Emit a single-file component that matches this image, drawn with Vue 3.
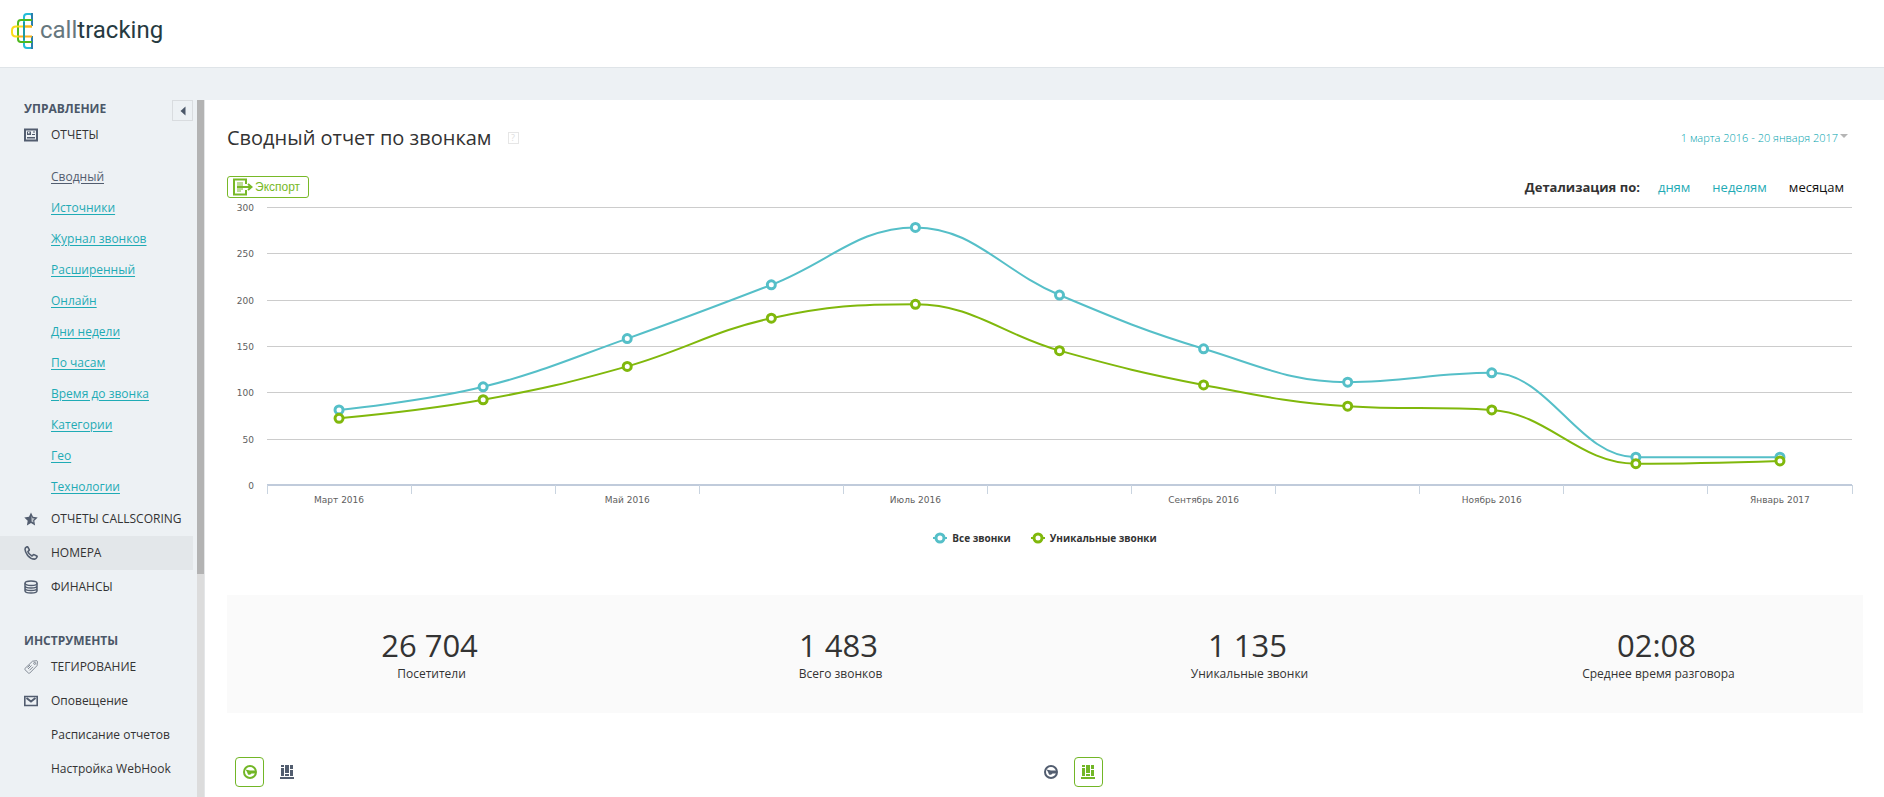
<script setup>
import { ref, computed, onMounted, onBeforeUnmount } from 'vue'

const reportLinks = ['Сводный', 'Источники', 'Журнал звонков', 'Расширенный', 'Онлайн', 'Дни недели', 'По часам', 'Время до звонка', 'Категории', 'Гео', 'Технологии']
const stats = [
  { value: '26 704', label: 'Посетители' },
  { value: '1 483', label: 'Всего звонков' },
  { value: '1 135', label: 'Уникальные звонки' },
  { value: '02:08', label: 'Среднее время разговора' }
]
const months = ['Март 2016', '', 'Май 2016', '', 'Июль 2016', '', 'Сентябрь 2016', '', 'Ноябрь 2016', '', 'Январь 2017']
const series = [
  { name: 'Все звонки', color: '#55bfc8', data: [81, 106, 158, 216, 278, 205, 147, 111, 121, 30, 30] },
  { name: 'Уникальные звонки', color: '#80b80c', data: [72, 92, 128, 180, 195, 145, 108, 85, 81, 23, 26] }
]
const panels = [{ active: 'pie' }, { active: 'bars' }]
const details = ['дням', 'неделям', 'месяцам']
const detail = ref('месяцам')

const chart = ref(null)
const width = ref(1636)
let observer
onMounted(() => {
  width.value = chart.value.clientWidth
  observer = new ResizeObserver(() => { width.value = chart.value.clientWidth })
  observer.observe(chart.value)
})
onBeforeUnmount(() => observer.disconnect())

const left = 40
const top = 9
const plotHeight = 278
const bottom = top + plotHeight
const right = computed(() => width.value - 11)
const step = computed(() => (right.value - left) / months.length)
const yOf = v => bottom - (v / 300) * plotHeight
const grid = [300, 250, 200, 150, 100, 50, 0]

// Spline whose control points never overshoot the neighbouring values
function spline(pts) {
  let d = `M${pts[0].x} ${pts[0].y}`
  let prev = pts[0]
  for (let i = 1; i < pts.length; i++) {
    const p = pts[i]
    const last = pts[i - 1]
    const next = pts[i + 1]
    let l = p
    let r = p
    if (next) {
      const lx = (1.5 * p.x + last.x) / 2.5
      const rx = (1.5 * p.x + next.x) / 2.5
      let ly = (1.5 * p.y + last.y) / 2.5
      let ry = (1.5 * p.y + next.y) / 2.5
      const c = ((ry - ly) * (rx - p.x)) / (rx - lx) + p.y - ry
      ly += c
      ry += c
      if (ly > last.y && ly > p.y) { ly = Math.max(last.y, p.y); ry = 2 * p.y - ly }
      else if (ly < last.y && ly < p.y) { ly = Math.min(last.y, p.y); ry = 2 * p.y - ly }
      if (ry > next.y && ry > p.y) { ry = Math.max(next.y, p.y); ly = 2 * p.y - ry }
      else if (ry < next.y && ry < p.y) { ry = Math.min(next.y, p.y); ly = 2 * p.y - ry }
      l = { x: lx, y: ly }
      r = { x: rx, y: ry }
    }
    d += `C${prev.x} ${prev.y} ${l.x} ${l.y} ${p.x} ${p.y}`
    prev = r
  }
  return d
}
const lines = computed(() => series.map(s => {
  const points = s.data.map((v, i) => ({ x: left + step.value * (i + 0.5), y: yOf(v) }))
  return { ...s, points, path: spline(points) }
}))
</script>

<template>
  <div class="page">
    <header class="header">
      <a href="#" class="logo" aria-label="calltracking">
        <svg width="24" height="38" viewBox="0 0 24 38" fill="none" stroke-width="2">
          <path d="M22 11V4q0-2-2-2h-3q-3 0-3 3v28q0 3 3 3h5" stroke="#22bdd8" />
          <path d="M22 1v13M22 24v13" stroke="#2a7fae" />
          <path d="M22 8H11q-3 0-3 3v16q0 3 3 3h11" stroke="#4fb81f" />
          <path d="M22 14.500H6q-4 0-4 4v2q0 4 4 4h2" stroke="#fbdc1a" />
          <path d="M8 24.500h14M14 14.500h8" stroke="#f8b21c" />
          <path d="M14 10v18" stroke="#1d9aa5" />
        </svg>
        <span class="brand"><span class="brand-light">call</span>tracking</span>
      </a>
    </header>

    <div class="body">
      <aside class="sidebar">
        <nav class="menu">
          <button class="collapse" type="button" aria-label="Свернуть меню">
            <svg width="6" height="10" viewBox="0 0 6 10"><path d="M5.500 .5v9L.5 5z" fill="#4b5768" /></svg>
          </button>
          <h2 class="section">УПРАВЛЕНИЕ</h2>
          <a href="#" class="item">
            <svg class="icon" viewBox="0 0 14 14"><path d="M1 1.500h12v11H1z" fill="none" stroke="#525d6f" stroke-width="2" /><path d="M3 3.500h4v3.500H3zM9 3.500h2v1H9zM8 6h3v1H8zM3 9h8v1.500H3z" fill="#525d6f" /><path d="M4 4h1.500v1.500H4z" fill="#edf1f4" /></svg>
            ОТЧЕТЫ
          </a>
          <ul class="sub">
            <li v-for="(link, i) in reportLinks" :key="link"><a href="#" :class="{ current: i === 0 }">{{ link }}</a></li>
          </ul>
          <a href="#" class="item">
            <svg class="icon" viewBox="0 0 14 14"><path d="M7 .5l2 4.300 4.700.6-3.400 3.300.8 4.700L7 11.100l-4.100 2.300.8-4.700L.3 5.400 5 4.800z" fill="#525d6f" /><path d="M7.500 4l1 2.200 2.300.3-1.700 1.700.4 2.400-2-1.100z" fill="#c3c9cf" /></svg>
            ОТЧЕТЫ CALLSCORING
          </a>
          <a href="#" class="item hovered">
            <svg class="icon" viewBox="0 0 14 14"><path d="M1 3.200Q1 1.600 3 .8q.6-.2.900.4l1.300 2.400q.2.600-.3 1-.9.700-1 1.100.8 2.200 3.900 4.200.5.200 1.300-1.100.4-.5 1-.2l2.600 1.400q.6.400.3 1-.8 1.900-2.300 2.100Q7 13.200 3.700 9.400 1.100 6 1 3.200z" fill="none" stroke="#525d6f" stroke-width="1.600" /></svg>
            НОМЕРА
          </a>
          <a href="#" class="item">
            <svg class="icon" viewBox="0 0 14 14" fill="none" stroke="#525d6f" stroke-width="1.500"><ellipse cx="7" cy="3.200" rx="6" ry="2.300" /><path d="M1 3.200v7.500c0 3 12 3 12 0V3.200M1 5.800c0 3 12 3 12 0M1 8.300c0 3 12 3 12 0" /></svg>
            ФИНАНСЫ
          </a>
          <h2 class="section second">ИНСТРУМЕНТЫ</h2>
          <a href="#" class="item">
            <svg class="icon" viewBox="0 0 14 14" fill="none" stroke="#828a95"><path d="M8.500 1.200l4.400-.5.6.6-.5 4.400-7.300 7.400q-.6.500-1.200 0L.9 9.600q-.5-.5 0-1.100zM4 9l3.500-3.500M5.500 10.300L9 6.800M3.500 7.500L6 5" /><circle cx="10.700" cy="3.400" r="1" /></svg>
            ТЕГИРОВАНИЕ
          </a>
          <a href="#" class="item">
            <svg class="icon" viewBox="0 0 14 14" fill="none" stroke="#525d6f"><path d="M.8 2.500h12.400v9H.8z" stroke-width="1.600" /><path d="M2.500 4L7 7.500 11.500 4" stroke-width="2" /></svg>
            Оповещение
          </a>
          <a href="#" class="item">Расписание отчетов</a>
          <a href="#" class="item">Настройка WebHook</a>
        </nav>
        <div class="track"><div class="thumb"></div></div>
      </aside>

      <main class="main">
        <div class="title-row">
          <h1>Сводный отчет по звонкам</h1>
          <button class="help" type="button" aria-label="Справка">?</button>
          <button class="period" type="button">1 марта 2016 - 20 января 2017<svg width="8" height="5" viewBox="0 0 8 5"><path d="M0 0h8L4 4z" fill="#b5b5b5" /></svg></button>
        </div>

        <div class="tools">
          <button class="export" type="button">
            <svg width="20" height="18" viewBox="0 0 20 18" fill="none" stroke="#78b928"><path d="M13 6V1.500H1v15h12V12" stroke-width="2" /><path d="M4 5h6M4 7h6M4 11h6M4 13h4" stroke-width="1" /><path d="M4 9h13" stroke-width="2" /><path d="M15 6l3.500 3-3.500 3" stroke-width="2" /></svg>
            Экспорт
          </button>
          <div class="detail">
            <strong>Детализация по:</strong>
            <a v-for="d in details" :key="d" href="#" :class="{ selected: d === detail }" @click.prevent="detail = d">{{ d }}</a>
          </div>
        </div>

        <div ref="chart" class="chart">
          <svg :width="width" height="310" role="img" aria-label="График звонков по месяцам">
            <g v-for="v in grid" :key="v">
              <line :x1="left" :x2="right" :y1="Math.round(yOf(v))" :y2="Math.round(yOf(v))" :class="v ? 'grid' : 'axis'" />
              <text x="27" :y="Math.round(yOf(v)) + 4" text-anchor="end">{{ v }}</text>
            </g>
            <line v-for="n in months.length + 1" :key="'t' + n" class="tick" :x1="left + step * (n - 1)" :x2="left + step * (n - 1)" :y1="bottom" :y2="bottom + 9" />
            <text v-for="(m, i) in months" :key="i" :x="left + step * (i + 0.5)" :y="bottom + 18" text-anchor="middle">{{ m }}</text>
            <g v-for="s in lines" :key="s.name">
              <path :d="s.path" fill="none" :stroke="s.color" stroke-width="2" />
              <circle v-for="(p, i) in s.points" :key="i" :cx="p.x" :cy="p.y" r="4" fill="#fff" :stroke="s.color" stroke-width="3" />
            </g>
          </svg>
          <div class="legend">
            <button v-for="s in series" :key="s.name" type="button">
              <svg width="14" height="12" viewBox="0 0 14 12"><path d="M0 6h14" :stroke="s.color" stroke-width="2" /><circle cx="7" cy="6" r="4" fill="#fff" :stroke="s.color" stroke-width="3" /></svg>
              {{ s.name }}
            </button>
          </div>
        </div>

        <section class="stats">
          <div v-for="s in stats" :key="s.label" class="stat">
            <div class="value">{{ s.value }}</div>
            <div class="label">{{ s.label }}</div>
          </div>
        </section>

        <div class="panels">
          <div v-for="(p, i) in panels" :key="i" class="switch">
            <button type="button" :class="{ active: p.active === 'pie' }" aria-label="Круговая диаграмма">
              <svg width="14" height="14" viewBox="0 0 14 14"><circle cx="7" cy="7" r="6" fill="none" stroke="currentColor" stroke-width="2" /><path d="M2.500 4.500L7 5.500h6v3H8.500Q7 10.500 5 9.500 4.300 7 2.500 4.500z" fill="currentColor" /></svg>
            </button>
            <button type="button" :class="{ active: p.active === 'bars' }" aria-label="Столбчатая диаграмма">
              <svg width="14" height="14" viewBox="0 0 14 14" fill="currentColor"><path d="M1 0h3v2H1zM1 3h3v8H1zM5 0h4v8H5zM5 9h4v2H5zM10 0h3v4h-3zM10 5h3v6h-3zM0 12h14v2H0z" /></svg>
            </button>
          </div>
        </div>
      </main>
    </div>
  </div>
</template>

<style>
body { margin: 0; }
</style>

<style scoped>
.page {
  display: flex;
  flex-direction: column;
  height: 100vh;
  overflow: hidden;
  background: #edf1f4;
  color: #333;
  font-family: "Open Sans", "Noto Sans", sans-serif;
  font-size: 12px;
  line-height: 16px;
}
* { box-sizing: border-box; }
button { padding: 0; border: 0; background: none; font: inherit; color: inherit; cursor: pointer; }
a { color: #1fabb5; text-decoration: none; }
svg { display: block; flex: none; }

.header { flex: none; height: 68px; padding: 12px 10px; background: #fff; border-bottom: 1px solid #dfe4e8; }
.logo { display: inline-flex; gap: 6px; }
.brand { color: #263a41; font: 24px/36px Roboto, sans-serif; }
.brand-light { color: #66777e; }

.body { display: flex; flex: 1; min-height: 0; padding-top: 32px; }
.sidebar { display: flex; flex: none; width: 205px; border-right: 1px solid #e4e6e8; }
.menu { position: relative; flex: 1; margin-right: 4px; overflow: hidden; }
.track { width: 7px; background: #dcdcdc; }
.thumb { height: 68%; background: #b3b3b3; }
.collapse {
  position: absolute;
  top: 0;
  right: 0;
  display: flex;
  align-items: center;
  justify-content: center;
  width: 21px;
  height: 21px;
  border: 1px solid #d9dcdf;
}
.section { margin: 0; padding: 0 24px; color: #4b5768; font-size: 12px; line-height: 18px; font-weight: 700; }
.section.second { margin-top: 28px; }
.item {
  display: flex;
  align-items: center;
  height: 34px;
  padding-left: 51px;
  color: #333;
  white-space: nowrap;
}
.item.hovered { background: #e3e7ea; }
.icon { width: 14px; height: 14px; margin: 0 13px 0 -27px; }
.sub { margin: 9px 0 0; padding: 0 0 0 51px; list-style: none; }
.sub li { display: flex; align-items: center; height: 31px; }
.sub a { text-decoration: underline; text-underline-offset: 2px; }
.sub .current { color: #525d6f; }

.main { flex: 1; min-width: 0; padding: 22px 21px 0 22px; background: #fff; overflow: hidden; }
.title-row { display: flex; align-items: center; height: 32px; }
h1 { margin: 0; font-size: 20px; line-height: 32px; font-weight: 400; }
.help { width: 11px; height: 12px; margin-left: 16px; border: 1px solid #e6e6e6; color: #ddd; font-size: 9px; line-height: 10px; }
.period { display: flex; align-items: center; gap: 2px; margin: 0 15px 0 auto; color: #00a3ae; font-size: 11px; font-weight: 300; }
.period svg { margin-bottom: 3px; }

.tools { display: flex; align-items: center; justify-content: space-between; height: 22px; margin-top: 22px; }
.export {
  display: flex;
  align-items: center;
  gap: 2px;
  height: 22px;
  padding: 0 8px 0 5px;
  border: 1px solid #78b928;
  border-radius: 3px;
  color: #78b928;
  font: 12px/20px "Liberation Sans", sans-serif;
}
.detail { display: flex; gap: 22px; padding-right: 19px; font-size: 13px; }
.detail strong { margin-right: -4px; }
.detail .selected { color: #111; }

.chart { height: 397px; overflow: hidden; }
.chart text { fill: #606060; font: 9px "DejaVu Sans", sans-serif; }
.grid { stroke: #ccc; }
.axis { stroke: #c0cbdb; stroke-width: 2px; }
.tick { stroke: #c9d4e0; }
.grid, .axis, .tick { shape-rendering: crispEdges; }
.legend { display: flex; justify-content: center; gap: 20px; margin-top: 22px; }
.legend button { display: flex; align-items: center; gap: 5px; color: #333; font-size: 10px; font-weight: 700; }

.stats { display: grid; grid-template-columns: repeat(4, 1fr); height: 118px; padding-top: 32px; background: #fafafa; text-align: center; }
.value { padding-right: 4px; font-size: 31px; line-height: 36px; font-weight: 400; }
.label { line-height: 22px; }

.panels { display: grid; grid-template-columns: 1fr 1fr; margin-top: 44px; padding: 0 25px 0 8px; }
.switch { display: flex; gap: 8px; }
.switch button { display: flex; align-items: center; justify-content: center; width: 29px; height: 30px; color: #525d6f; }
.switch .active { border: 1px solid #72b626; border-radius: 4px; color: #72b626; }
</style>
